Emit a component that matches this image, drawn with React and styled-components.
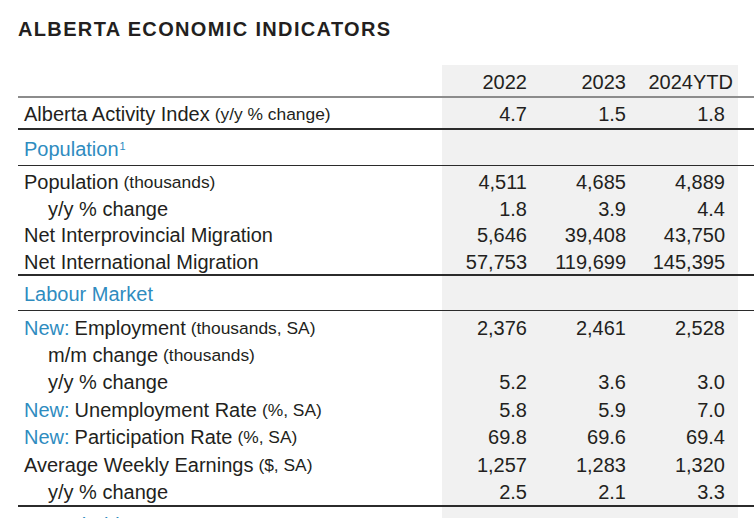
import React from 'react';
import styled, { createGlobalStyle, css } from 'styled-components';

const GlobalStyle = createGlobalStyle`
  html, body {
    margin: 0;
    padding: 0;
    background: #ffffff;
    overflow: hidden;
  }
  body {
    font-family: "Liberation Sans", Arial, sans-serif;
    color: #231f20;
  }
`;

const Page = styled.div`
  width: 754px;
  height: 518px;
  overflow: hidden;
  padding: 19px 0 0 18px;
  box-sizing: border-box;
`;

const Title = styled.h1`
  margin: 0;
  font-size: 20px;
  line-height: 20px;
  font-weight: 700;
  letter-spacing: 1.35px;
  color: #231f20;
`;

const Table = styled.div`
  width: 736px;
  margin-top: 26px;
`;

const Row = styled.div`
  display: grid;
  grid-template-columns: 424px 99px 99px 98px 16px;
  height: ${(p) => p.h || 27.6}px;
  box-sizing: content-box;
  ${(p) => p.line === 'grey' && css`border-bottom: 2px solid #8c8c8c;`}
  ${(p) => p.line === 'thick' && css`border-bottom: 2px solid #2b2b2b;`}
  ${(p) => p.line === 'thin' && css`border-bottom: 1px solid #2b2b2b;`}
`;

const Label = styled.div`
  display: flex;
  align-items: center;
  padding: 3px 0 0 ${(p) => (p.indent ? 30 : 6)}px;
  font-size: 20px;
  white-space: nowrap;
  color: ${(p) => (p.section ? '#2f8cbf' : '#231f20')};
`;

const Unit = styled.span`
  font-size: 17.4px;
  margin-left: 5px;
`;

const Blue = styled.span`
  color: #2f8cbf;
  margin-right: 5px;
`;

const Sup = styled.sup`
  font-size: 11px;
  line-height: 0;
  position: relative;
  top: -3px;
  margin-left: 1px;
`;

const Num = styled.div`
  display: flex;
  align-items: center;
  justify-content: flex-end;
  background: #f1f1f1;
  padding: 3px ${(p) => p.pr ?? 14}px 0 0;
  font-size: 20px;
  color: #231f20;
`;

const Group = styled.div`
  padding-top: ${(p) => p.pt || 0}px;
  border-bottom: 2px solid #2b2b2b;
  background: linear-gradient(to right, transparent 424px, #f1f1f1 424px, #f1f1f1 720px, transparent 720px);
`;

const Spacer = styled.div``;

const DataRow = ({ label, unit, indent, blue, values = [], h }) => (
  <Row h={h}>
    <Label indent={indent}>
      {blue && <Blue>{blue}</Blue>}
      {label}
      {unit && <Unit>{unit}</Unit>}
    </Label>
    <Num>{values[0]}</Num>
    <Num>{values[1]}</Num>
    <Num pr={13}>{values[2]}</Num>
    <Spacer />
  </Row>
);

const SectionRow = ({ children, h, line = 'thin' }) => (
  <Row h={h} line={line}>
    <Label section>{children}</Label>
    <Num />
    <Num />
    <Num />
    <Spacer />
  </Row>
);

const population = [
  { label: 'Population', unit: '(thousands)', values: ['4,511', '4,685', '4,889'] },
  { label: 'y/y % change', indent: true, values: ['1.8', '3.9', '4.4'] },
  { label: 'Net Interprovincial Migration', values: ['5,646', '39,408', '43,750'] },
  { label: 'Net International Migration', values: ['57,753', '119,699', '145,395'] },
];

const labour = [
  { blue: 'New:', label: 'Employment', unit: '(thousands, SA)', values: ['2,376', '2,461', '2,528'] },
  { label: 'm/m change', unit: '(thousands)', indent: true, values: ['', '', ''] },
  { label: 'y/y % change', indent: true, values: ['5.2', '3.6', '3.0'] },
  { blue: 'New:', label: 'Unemployment Rate', unit: '(%, SA)', values: ['5.8', '5.9', '7.0'] },
  { blue: 'New:', label: 'Participation Rate', unit: '(%, SA)', values: ['69.8', '69.6', '69.4'] },
  { label: 'Average Weekly Earnings', unit: '($, SA)', values: ['1,257', '1,283', '1,320'] },
  { label: 'y/y % change', indent: true, values: ['2.5', '2.1', '3.3'] },
];

const App = () => (
  <>
    <GlobalStyle />
    <Page>
      <Title>ALBERTA ECONOMIC INDICATORS</Title>
      <Table>
        <Row h={31} line="grey">
          <Label />
          <Num>2022</Num>
          <Num>2023</Num>
          <Num pr={5}>2024YTD</Num>
          <Spacer />
        </Row>
        <Row h={30} line="thick">
          <Label>
            Alberta Activity Index<Unit>(y/y % change)</Unit>
          </Label>
          <Num>4.7</Num>
          <Num>1.5</Num>
          <Num pr={13}>1.8</Num>
          <Spacer />
        </Row>
        <SectionRow h={35}>
          Population<Sup>1</Sup>
        </SectionRow>
        <Group pt={2}>
          {population.map((r, i) => (
            <DataRow key={i} {...r} h={26.5} />
          ))}
        </Group>
        <SectionRow h={34}>Labour Market</SectionRow>
        <Group pt={2}>
          {labour.map((r, i) => (
            <DataRow key={i} {...r} h={27.4} />
          ))}
        </Group>
        <SectionRow h={34}>Household Sector</SectionRow>
      </Table>
    </Page>
  </>
);

export default App;
